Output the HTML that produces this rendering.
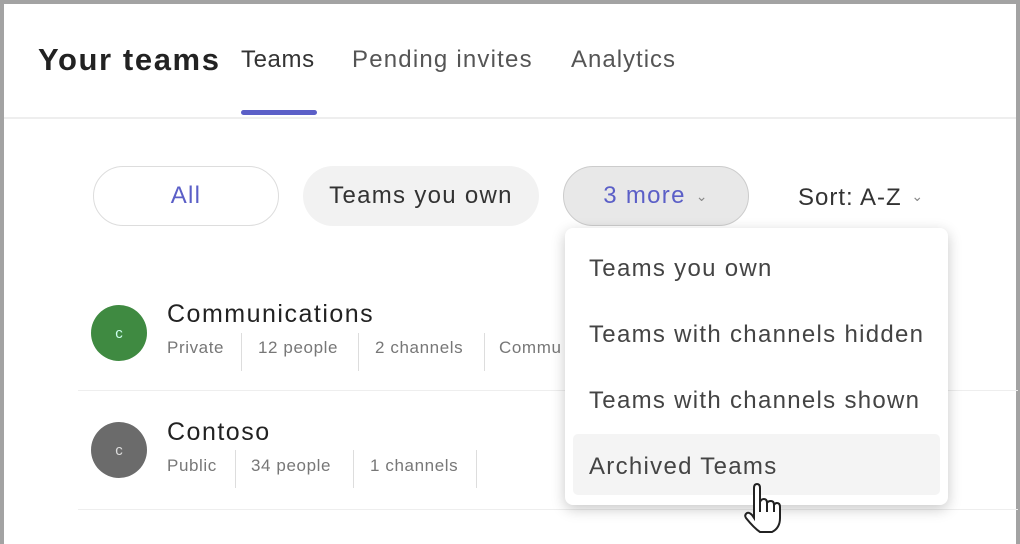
<!DOCTYPE html>
<html><head><meta charset="utf-8"><style>
*{margin:0;padding:0;box-sizing:border-box}
body{width:1020px;height:535px;overflow:hidden;background:#a3a3a3;font-family:"Liberation Sans",sans-serif;position:relative}
.page{position:absolute;left:4px;top:4px;width:1012px;height:540px;background:#fff}
.a{position:absolute;white-space:nowrap}
.pill{position:absolute;height:60px;border-radius:30px;display:flex;align-items:center;justify-content:center;font-size:24px;letter-spacing:1.3px}
.sep{position:absolute;width:1px;background:#ddd}
.meta{font-size:17px;color:#777;letter-spacing:0.6px}
.item{position:absolute;left:24px;font-size:24px;color:#444;letter-spacing:1.3px}
.tab{font-size:24px;letter-spacing:1px}
</style></head><body>
<div class="page"></div>
<div class="a" style="left:38px;top:42px;font-size:31px;font-weight:bold;color:#222;letter-spacing:1.6px">Your teams</div>
<div class="a tab" style="left:241px;top:46px;color:#333;letter-spacing:0.6px">Teams</div>
<div class="a tab" style="left:352px;top:46px;color:#555;letter-spacing:1.2px">Pending invites</div>
<div class="a tab" style="left:571px;top:46px;color:#555">Analytics</div>
<div class="a" style="left:241px;top:110px;width:76px;height:5px;border-radius:3px;background:#5b5fc7"></div>
<div class="a" style="left:4px;top:117px;width:1012px;height:2px;background:#eee"></div>

<div class="pill" style="left:93px;top:166px;width:186px;background:#fff;border:1.5px solid #ddd;color:#5b5fc7">All</div>
<div class="pill" style="left:303px;top:166px;width:236px;background:#f2f2f2;color:#333">Teams you own</div>
<div class="pill" style="left:563px;top:166px;width:186px;background:#e8e8e8;border:1.5px solid #ccc;color:#5b5fc7">3 more <span style="font-size:14px;color:#888;margin-left:10px">&#8964;</span></div>
<div class="a" style="left:798px;top:184px;font-size:24px;color:#333;letter-spacing:1px">Sort: A-Z <span style="font-size:14px;color:#888;margin-left:2px;position:relative;top:-4px">&#8964;</span></div>

<div class="a" style="left:91px;top:305px;width:56px;height:56px;border-radius:50%;background:#3f8a41;color:#cfe;font-size:15px;display:flex;align-items:center;justify-content:center">c</div>
<div class="a" style="left:167px;top:300px;font-size:25px;color:#222;letter-spacing:1.5px">Communications</div>
<div class="a meta" style="left:167px;top:338px">Private</div>
<div class="sep" style="left:241px;top:333px;height:38px"></div>
<div class="a meta" style="left:258px;top:338px">12 people</div>
<div class="sep" style="left:358px;top:333px;height:38px"></div>
<div class="a meta" style="left:375px;top:338px">2 channels</div>
<div class="sep" style="left:484px;top:333px;height:38px"></div>
<div class="a meta" style="left:499px;top:338px">Commu</div>
<div class="a" style="left:78px;top:390px;width:940px;height:1px;background:#eee"></div>

<div class="a" style="left:91px;top:422px;width:56px;height:56px;border-radius:50%;background:#6b6b6b;color:#ddd;font-size:15px;display:flex;align-items:center;justify-content:center">c</div>
<div class="a" style="left:167px;top:418px;font-size:25px;color:#222;letter-spacing:1.5px">Contoso</div>
<div class="a meta" style="left:167px;top:456px">Public</div>
<div class="sep" style="left:235px;top:450px;height:38px"></div>
<div class="a meta" style="left:251px;top:456px">34 people</div>
<div class="sep" style="left:353px;top:450px;height:38px"></div>
<div class="a meta" style="left:370px;top:456px">1 channels</div>
<div class="sep" style="left:476px;top:450px;height:38px"></div>
<div class="a" style="left:78px;top:509px;width:940px;height:1px;background:#eee"></div>

<div class="a" style="left:565px;top:228px;width:383px;height:277px;background:#fff;border-radius:8px;box-shadow:0 4px 14px rgba(0,0,0,.22)">
<div class="a" style="left:8px;top:206px;width:367px;height:61px;background:#f4f4f4;border-radius:5px"></div>
<div class="item" style="top:27px">Teams you own</div>
<div class="item" style="top:93px">Teams with channels hidden</div>
<div class="item" style="top:159px">Teams with channels shown</div>
<div class="item" style="top:225px">Archived Teams</div>
</div>
<svg class="a" style="left:740px;top:480px" width="44" height="55" viewBox="0 0 44 55"><path d="M14 8 Q14 4 17 4 Q20 4 20 8 L20 22 Q21 19 24 19 Q27 19 27 23 Q28 21 31 21 Q34 21 34 25 Q35 23 37 23 Q40 23 40 27 L40 38 Q40 48 32 52 L20 52 Q14 48 6 38 Q4 35 7 33 Q9 32 12 35 L14 38 Z M20 22 L20 32 M27 23 L27 32 M34 25 L34 32" fill="#fff" stroke="#222" stroke-width="2"/></svg>
</body></html>
